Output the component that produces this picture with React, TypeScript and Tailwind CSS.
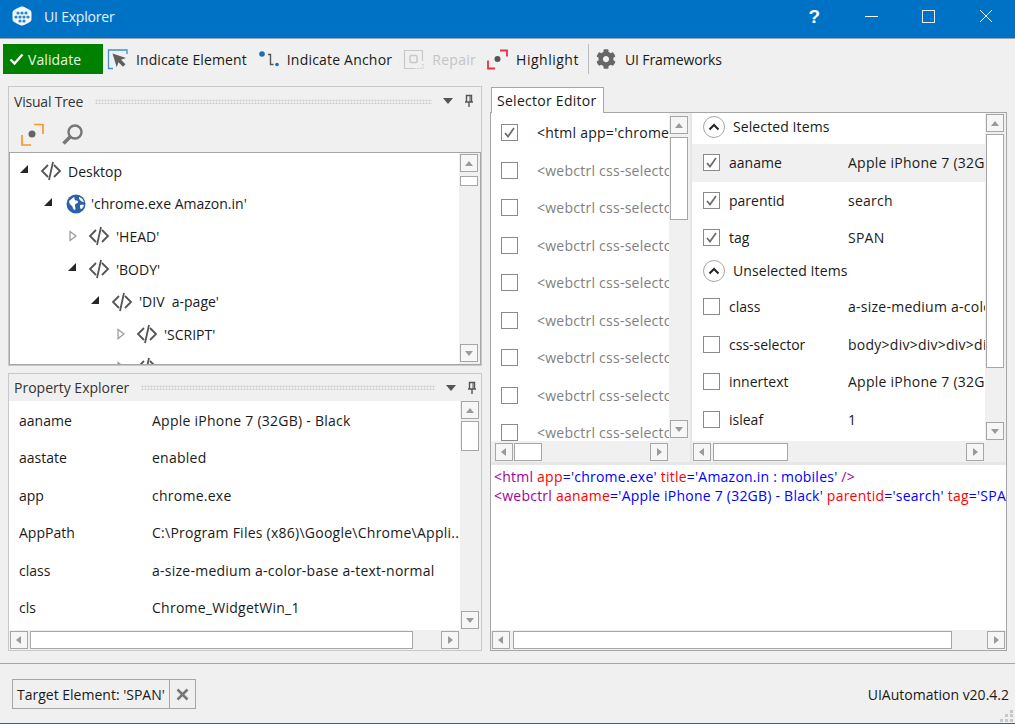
import React from "react";
import { FaCog } from "react-icons/fa";

const Tri = ({ d, c = "#9a9a9a" }: { d: "u" | "d" | "l" | "r"; c?: string }) => {
  const p = { u: "1,8 5,3 9,8", d: "1,3 9,3 5,8", l: "7,1 7,9 2,5", r: "3,1 3,9 8,5" }[d];
  return (
    <svg width="10" height="10" viewBox="0 0 10 10"><polygon points={p} fill={c} /></svg>
  );
};

const Btn = ({ d }: { d: "u" | "d" | "l" | "r" }) => (
  <div className="w-[18px] h-[18px] shrink-0 border border-[#a6a6a6] bg-[#f6f6f6] flex items-center justify-center">
    <Tri d={d} />
  </div>
);

const VScroll = ({ w, top, h, pt, pb, cls = "" }: { w: string; top: string; h: string; pt: string; pb: string; cls?: string }) => (
  <div className={`${w} ${pt} ${pb} ${cls} shrink-0 bg-[#f0f0f0] flex flex-col items-start pl-px`}>
    <Btn d="u" />
    <div className={`${top} ${h} w-[18px] shrink-0 border border-[#a6a6a6] bg-white`} />
    <div className="flex-1" />
    <Btn d="d" />
  </div>
);

const HScroll = ({ left, w, pl, pr, h = "h-[20px]" }: { left: string; w: string; pl: string; pr: string; h?: string }) => (
  <div className={`${h} ${pl} ${pr} shrink-0 bg-[#f0f0f0] flex items-center`}>
    <Btn d="l" />
    <div className={`${left} ${w} h-[18px] shrink-0 border border-[#a6a6a6] bg-white`} />
    <div className="flex-1" />
    <Btn d="r" />
  </div>
);

const CodeIcon = () => (
  <svg width="22" height="20" viewBox="0 0 22 20" fill="none" stroke="#555" strokeWidth="1.800" className="shrink-0">
    <path d="M8 4 2 10l6 6M14 4l6 6-6 6M13 1 9 19" />
  </svg>
);

const Globe = () => (
  <svg width="20" height="20" viewBox="0 0 20 20" className="shrink-0 -ml-px mr-[-1px]">
    <circle cx="10" cy="10" r="9.500" fill="#2b62a8" />
    <path d="M3 7c2-1 3-3 5-4 1 1 0 2 1 3s3 0 3 2-3 1-3 3 1 4 0 5c-2 0-2-3-3-4S3 10 3 7zM13 3c2 .5 4 2 5 5-2 0-3-1-4-2s-1-2-1-3zM14 11c1.500-.5 3-.5 4 0-.5 2-2 4-3 4s-1-3-1-4z" fill="#fff" />
  </svg>
);

const TreeRow = ({ x, arrow, icon, label }: { x: string; arrow: "open" | "closed"; icon?: React.ReactNode; label: string }) => (
  <div className={`h-[32.600px] flex items-center ${x}`}>
    <div className={`${icon ? "w-[24px]" : "w-[21px]"} shrink-0 flex`}>
      {arrow === "open" ? (
        <svg width="10" height="10" viewBox="0 0 10 10" className="-mt-[4px]"><polygon points="9,1 9,9 1,9" fill="#262626" /></svg>
      ) : (
        <svg width="10" height="12" viewBox="0 0 10 12" className="ml-[1px]"><polygon points="2,1.500 8,6 2,10.500" fill="none" stroke="#999" strokeWidth="1.200" /></svg>
      )}
    </div>
    {icon ?? <CodeIcon />}
    <span className="ml-[6px] whitespace-pre">{label}</span>
  </div>
);

const PanelHead = ({ title, dotsW, h, tcls }: { title: string; dotsW: string; h: string; tcls: string }) => (
  <div className={`${h} flex items-center pl-[5px] text-[#333]`}>
    <span className={`whitespace-nowrap ${tcls}`}>{title}</span>
    <div className={`ml-[12px] ${dotsW} h-[5px] bg-[radial-gradient(#cfcfcf_45%,transparent_50%)] bg-[length:3px_3px]`} />
    <svg width="12" height="8" viewBox="0 0 12 8" className="ml-[10px]"><polygon points="1,1 11,1 6,7" fill="#555" /></svg>
    <svg width="10" height="14" viewBox="0 0 10 14" className="ml-[10px]" fill="none" stroke="#555" strokeWidth="1.400">
      <path d="M2.500 1.500h5v6.500h-5zM1 8h8M5 8v5" /><path d="M6 2v6" strokeWidth="1" />
    </svg>
  </div>
);

const PropRow = ({ k, v }: { k: string; v: string }) => (
  <div className="h-[37.500px] flex items-center pl-[10px] whitespace-nowrap">
    <span className="w-[133px] shrink-0">{k}</span>
    <span className="tracking-[0.25px]">{v}</span>
  </div>
);

const Check = ({ on }: { on?: boolean }) => (
  <div className="w-[17px] h-[17px] shrink-0 border border-[#8a8a8a] bg-white flex items-center justify-center">
    {on && (
      <svg width="13" height="13" viewBox="0 0 13 13" fill="none" stroke="#6b6b6b" strokeWidth="1.700"><path d="M2 7l3 3.500L11 2" /></svg>
    )}
  </div>
);

const SelRow = ({ on, text }: { on?: boolean; text: string }) => (
  <div className="h-[37.500px] flex items-center pl-[10px]">
    <Check on={on} />
    <span className={`ml-[19px] whitespace-nowrap tracking-[0.25px] ${on ? "text-[#1a1a1a]" : "text-[#808080]"}`}>{text}</span>
  </div>
);

const AttrRow = ({ on, k, v, hl }: { on?: boolean; k: string; v: string; hl?: boolean }) => (
  <div className={`h-[37.500px] flex items-center pl-[11px] whitespace-nowrap ${hl ? "bg-[#f0f0f0]" : ""}`}>
    <Check on={on} />
    <span className="ml-[9px] w-[119px] shrink-0">{k}</span>
    <span className="tracking-[0.25px]">{v}</span>
  </div>
);

const Section = ({ label, cls }: { label: string; cls: string }) => (
  <div className={`${cls} flex items-center pl-[11px]`}>
    <div className="w-[22px] h-[22px] rounded-full border border-[#a6a6a6] bg-white flex items-center justify-center">
      <svg width="12" height="8" viewBox="0 0 12 8" fill="none" stroke="#222" strokeWidth="2"><path d="M1.500 6.500 6 2l4.500 4.500" /></svg>
    </div>
    <span className="ml-[8px] tracking-[0.1px]">{label}</span>
  </div>
);

const R = ({ c }: { c: string }) => <span className="text-[#ff0000]">{c}</span>;
const B = ({ c }: { c: string }) => <span className="text-[#0000ff]">{c}</span>;
const P = ({ c }: { c: string }) => <span className="text-[#a000a0]">{c}</span>;

export default function App() {
  return (
    <div className="w-[1015px] h-[724px] overflow-hidden flex flex-col bg-[#f0f0f0] text-[14px] text-[#1a1a1a] font-['Open_Sans','Noto_Sans',sans-serif] leading-[19px]">
      {/* title bar */}
      <div className="h-[38px] shrink-0 bg-[#0072c6] flex items-center text-white pb-[6px]">
        <svg width="24" height="24" viewBox="0 0 24 24" className="ml-[10px]">
          <path d="M12 2.500c1 0 2 .3 7 3 2 1 2.500 2 2.500 3.500v6c0 1.500-.5 2.500-2.500 3.500-5 2.700-6 3-7 3s-2-.3-7-3c-2-1-2.500-2-2.500-3.500V9c0-1.500.5-2.500 2.500-3.500 5-2.700 6-3 7-3z" fill="#f2f7fb" />
          <g fill="#2f86cc">
            <circle cx="8" cy="9" r="1.600" /><circle cx="12" cy="9" r="1.600" /><circle cx="16" cy="9" r="1.600" />
            <circle cx="6" cy="13" r="1.600" /><circle cx="10" cy="13" r="1.600" /><circle cx="14" cy="13" r="1.600" /><circle cx="18" cy="13" r="1.600" />
            <circle cx="10" cy="17" r="1.600" /><circle cx="14" cy="17" r="1.600" />
          </g>
        </svg>
        <span className="ml-[10px] text-[#e8f2fa] tracking-[-0.2px]">UI Explorer</span>
        <div className="flex-1" />
        <span className="text-[19px] font-bold mr-[45px] font-['Liberation_Sans',sans-serif]">?</span>
        <div className="w-[13px] h-px bg-white mr-[44px]" />
        <div className="w-[13px] h-[13px] border border-[#e0eef8] mr-[44px]" />
        <svg width="14" height="14" viewBox="0 0 14 14" stroke="#fff" strokeWidth="1" className="mr-[22px]"><path d="M1 1l12 12M13 1 1 13" /></svg>
      </div>
      <div className="h-px shrink-0 bg-[#9aa5ad]" />

      {/* toolbar */}
      <div className="h-[39px] shrink-0 flex items-center pl-[3px] pt-[1px] whitespace-nowrap">
        <div className="w-[100px] h-[30px] bg-[#008000] text-white flex items-center pl-[6px]">
          <svg width="15" height="13" viewBox="0 0 15 13" fill="none" stroke="#fff" strokeWidth="2.400"><path d="M1.500 6.500 5.500 10.500 13.500 1.500" /></svg>
          <span className="ml-[4px] text-[#e8f5e8] tracking-[0.1px]">Validate</span>
        </div>
        <svg width="21" height="21" viewBox="0 0 21 21" className="ml-[4px]" fill="none">
          <path d="M6 1H1.500v18.500H6M1.500 1H20V5" stroke="#3f8fd0" strokeWidth="1.300" />
          <path d="M5.500 4.500 19 9l-5 1.800 4.500 4.500-2.500 2.500-4.500-4.500-1.800 5z" fill="#5f5f5f" />
        </svg>
        <span className="ml-[8px] tracking-[0.1px]">Indicate Element</span>
        <svg width="21" height="20" viewBox="0 0 21 20" className="ml-[11px]" fill="none">
          <circle cx="4" cy="5" r="2.800" fill="#1f6fb5" />
          <path d="M10 5.500h2.500v10h3" stroke="#555" strokeWidth="1.400" />
          <circle cx="19" cy="15.500" r="1.800" fill="#1f6fb5" />
        </svg>
        <span className="ml-[8px] tracking-[0.2px]">Indicate Anchor</span>
        <svg width="21" height="21" viewBox="0 0 21 21" className="ml-[11px]" fill="none" stroke="#c8c8c8">
          <path d="M19.500 12V1.500H1.500v18h11" strokeWidth="1.200" />
          <path d="M14 19.500h6v-6" strokeDasharray="1.500 1.500" strokeWidth="1.200" />
          <rect x="7" y="6.500" width="7" height="7" rx="1" strokeWidth="1.500" />
        </svg>
        <span className="ml-[8px] text-[#c4c4c4] tracking-[0.3px]">Repair</span>
        <svg width="21" height="21" viewBox="0 0 21 21" className="ml-[11px]" fill="none" stroke="#e8304a" strokeWidth="1.800">
          <path d="M1 11.500v8h7M13 1.500h7v6" />
          <circle cx="10.500" cy="10" r="3" fill="#555" stroke="none" />
        </svg>
        <span className="ml-[8px] tracking-[0.5px]">Highlight</span>
        <div className="w-px h-[30px] bg-[#bdbdbd] ml-[9px]" />
        <FaCog className="ml-[7px] text-[#666] w-[20px] h-[20px]" />
        <span className="ml-[9px] tracking-[-0.1px]">UI Frameworks</span>
      </div>

      {/* main */}
      <div className="h-[565px] shrink-0 mt-[8px] px-[8px] flex gap-[8px]">
        {/* left column */}
        <div className="w-[474px] shrink-0 flex flex-col gap-[7px]">
          <div className="h-[280px] border border-[#c8c8c8] flex flex-col">
            <PanelHead title="Visual Tree" tcls="tracking-[-0.2px]" dotsW="w-[337px]" h="h-[30px] pb-[2px]" />
            <div className="h-[35px] flex items-center pl-[12px] gap-[17px] shrink-0">
              <svg width="23" height="23" viewBox="0 0 23 23" fill="none" stroke="#f59a23" strokeWidth="1.700">
                <path d="M1 12v10h9M13 1.500h9V11" /><circle cx="11" cy="11" r="3.500" fill="#666" stroke="none" />
              </svg>
              <svg width="23" height="23" viewBox="0 0 23 23" fill="none" stroke="#777">
                <circle cx="14" cy="9" r="6.500" strokeWidth="2.400" /><path d="M9 14 2.500 20.500" strokeWidth="3.600" />
              </svg>
            </div>
            <div className="flex-1 min-h-0 border border-[#a6a6a6] flex bg-white">
              <div className="flex-1 min-w-0 overflow-hidden pt-[2px]">
                <TreeRow x="pl-[9px]" arrow="open" label="Desktop" />
                <TreeRow x="pl-[33px]" arrow="open" icon={<Globe />} label="'chrome.exe Amazon.in'" />
                <TreeRow x="pl-[57px]" arrow="closed" label="'HEAD'" />
                <TreeRow x="pl-[57px]" arrow="open" label="'BODY'" />
                <TreeRow x="pl-[80px]" arrow="open" label="'DIV  a-page'" />
                <TreeRow x="pl-[105px]" arrow="closed" label="'SCRIPT'" />
                <TreeRow x="pl-[105px]" arrow="closed" label="" />
              </div>
              <VScroll w="w-[21px]" top="mt-[4px]" h="h-[10px]" pt="pt-[1px]" pb="pb-[2px]" />
            </div>
          </div>
          <div className="h-[278px] border border-[#c8c8c8] flex flex-col">
            <PanelHead title="Property Explorer" tcls="" dotsW="w-[294px]" h="h-[28px]" />
            <div className="h-[229px] shrink-0 flex bg-white">
              <div className="flex-1 min-w-0 overflow-hidden pt-[0.6px]">
                <PropRow k="aaname" v="Apple iPhone 7 (32GB) - Black" />
                <PropRow k="aastate" v="enabled" />
                <PropRow k="app" v="chrome.exe" />
                <PropRow k="AppPath" v="C:\Program Files (x86)\Google\Chrome\Appli..." />
                <PropRow k="class" v="a-size-medium a-color-base a-text-normal" />
                <PropRow k="cls" v="Chrome_WidgetWin_1" />
              </div>
              <VScroll w="w-[21px]" top="mt-[2px]" h="h-[30px]" pt="pt-0" pb="pb-[1px]" />
            </div>
            <HScroll left="ml-[2px]" w="w-[383px]" pl="pl-px" pr="pr-[22px]" />
          </div>
        </div>

        {/* right column */}
        <div className="w-[517px] shrink-0 flex flex-col">
          <div className="h-[26px] shrink-0 flex items-end pl-px">
            <div className="w-[113px] h-[26px] mb-[-1px] z-10 border border-b-0 border-[#a6a6a6] bg-white flex items-center pl-[5px] whitespace-nowrap tracking-[0.27px]">Selector Editor</div>
          </div>
          <div className="flex-1 min-h-0 border border-[#a6a6a6] flex flex-col bg-white">
            <div className="h-[349px] shrink-0 flex">
              <div className="w-[201px] shrink-0 flex flex-col border-r-2 border-[#e6e6e6]">
                <div className="flex-1 min-h-0 flex">
                  <div className="w-[178px] shrink-0 overflow-hidden pt-[1px]">
                    <SelRow on text="<html app='chrome.exe' title='Amazon.in'" />
                    {Array.from({ length: 8 }).map((_, i) => (
                      <SelRow key={i} text="<webctrl css-selector='body>div'" />
                    ))}
                  </div>
                  <VScroll w="w-[21px]" top="mt-[3px]" h="h-[83px]" pt="pt-[3px]" pb="pb-[3px]" />
                </div>
                <HScroll left="ml-px" w="w-[28px]" pl="pl-[4px]" pr="pr-[22px]" h="h-[21px]" />
              </div>
              <div className="flex-1 min-w-0 flex flex-col">
                <div className="flex-1 min-h-0 flex">
                  <div className="flex-1 min-w-0 overflow-hidden">
                    <Section label="Selected Items" cls="h-[31px] pb-[4px]" />
                    <AttrRow on hl k="aaname" v="Apple iPhone 7 (32GB) - Black" />
                    <AttrRow on k="parentid" v="search" />
                    <AttrRow on k="tag" v="SPAN" />
                    <Section label="Unselected Items" cls="h-[31.400px] pb-[3px]" />
                    <AttrRow k="class" v="a-size-medium a-color-base" />
                    <AttrRow k="css-selector" v="body>div>div>div>div>div" />
                    <AttrRow k="innertext" v="Apple iPhone 7 (32GB) - Black" />
                    <AttrRow k="isleaf" v="1" />
                  </div>
                  <VScroll w="w-[21px]" top="mt-[2px]" h="h-[234px]" pt="pt-px" pb="pb-px" />
                </div>
                <HScroll left="ml-[2px]" w="w-[75px]" pl="pl-px" pr="pr-[22px]" h="h-[21px]" />
              </div>
            </div>
            <div className="h-[3px] shrink-0 bg-[#e6e6e6]" />
            <div className="flex-1 min-h-0 pl-[3px] pt-[2px] overflow-hidden whitespace-nowrap leading-[19px] tracking-[0.23px]">
              <div><P c="<html " /><R c="app" /><B c="='chrome.exe' " /><R c="title" /><B c="='Amazon.in : mobiles' " /><P c="/>" /></div>
              <div><P c="<webctrl " /><R c="aaname" /><B c="='Apple iPhone 7 (32GB) - Black' " /><R c="parentid" /><B c="='search' " /><R c="tag" /><B c="='SPAN' " /><P c="/>" /></div>
            </div>
            <HScroll left="ml-[3px]" w="w-[439px]" pl="pl-px" pr="pr-[1px]" />
          </div>
        </div>
      </div>

      {/* footer */}
      <div className="mt-[12px] h-px shrink-0 bg-[#a6a6a6]" />
      <div className="flex-1 min-h-0 relative flex items-center justify-between pl-[12px] pr-[6px] pt-[1px]">
        <div className="h-[30px] border border-[#a6a6a6] flex items-center whitespace-nowrap">
          <span className="px-[4px]">Target Element: 'SPAN'</span>
          <div className="w-[26px] h-full border-l border-[#a6a6a6] flex items-center justify-center">
            <svg width="13" height="13" viewBox="0 0 13 13" stroke="#777" strokeWidth="2.600"><path d="M1.500 1.500l10 10M11.500 1.500l-10 10" /></svg>
          </div>
        </div>
        <span className="whitespace-nowrap">UIAutomation v20.4.2</span>
        <svg width="14" height="14" viewBox="0 0 14 14" fill="#c8c8c8" className="absolute right-[1px] bottom-0">
          <rect x="10" y="1" width="3" height="3" /><rect x="5" y="5" width="3" height="3" /><rect x="10" y="5" width="3" height="3" />
          <rect x="0" y="10" width="3" height="3" /><rect x="5" y="10" width="3" height="3" /><rect x="10" y="10" width="3" height="3" />
        </svg>
      </div>
      <div className="h-px shrink-0 bg-[#0072c6]" />
    </div>
  );
}
